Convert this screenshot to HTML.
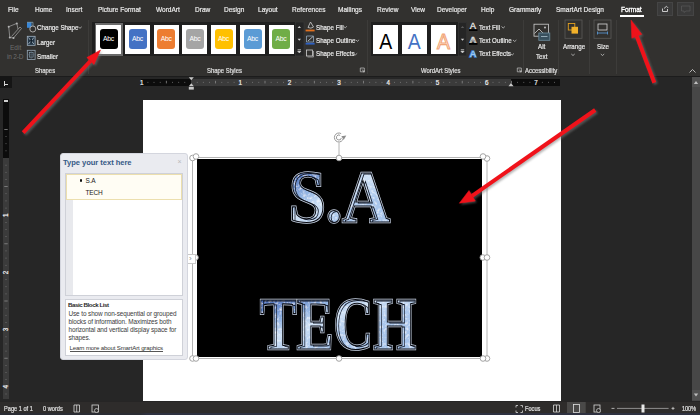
<!DOCTYPE html>
<html><head><meta charset="utf-8">
<style>
*{margin:0;padding:0;box-sizing:border-box}
html,body{width:700px;height:415px;overflow:hidden;background:#262626;font-family:"Liberation Sans",sans-serif;color:#e6e6e6}
.tab,.lbl,.btxt,.st{-webkit-text-stroke:0.2px currentColor}
.a{position:absolute}
#ribbon{left:0;top:0;width:700px;height:77px;background:#32312f;border-bottom:1px solid #1c1c1c}
.tab{position:absolute;top:5.3px;font-size:7.6px;color:#ececec;white-space:nowrap;transform:scaleX(.86);transform-origin:0 0}
.lbl{position:absolute;top:67.2px;font-size:6.9px;color:#e0e0e0;white-space:nowrap;transform:scaleX(.86);transform-origin:0 0}
.sep{position:absolute;top:20px;width:1px;height:54px;background:#3d3c3a}
.btxt{position:absolute;font-size:7.4px;color:#ececec;white-space:nowrap;transform:scaleX(.84);transform-origin:0 0}
.gal{position:absolute;top:22px;height:34px;background:#1f1f1f}
.tile{position:absolute;top:24.5px;width:25px;height:29px;background:#fff}
.sw{position:absolute;left:3.5px;top:4px;width:18px;height:20.5px;border-radius:3px;color:#fff;font-size:6.8px;text-align:center;line-height:19.5px;letter-spacing:-0.3px}
#doc{left:0;top:77px;width:700px;height:324px;background:#262626}
#page{left:142.6px;top:100.2px;width:418.2px;height:301px;background:#fff}
#status{left:0;top:401px;width:700px;height:14px;background:#2e2c2b;border-top:1px solid #262525}
.st{position:absolute;top:3.3px;font-size:6.8px;color:#e0e0e0;white-space:nowrap;transform:scaleX(.83);transform-origin:0 0}
</style></head><body>
<div id="ribbon" class="a">
  <div class="tab" style="left:8px">File</div>
  <div class="tab" style="left:35px">Home</div>
  <div class="tab" style="left:66px">Insert</div>
  <div class="tab" style="left:98px">Picture Format</div>
  <div class="tab" style="left:156px">WordArt</div>
  <div class="tab" style="left:195px">Draw</div>
  <div class="tab" style="left:224px">Design</div>
  <div class="tab" style="left:258px">Layout</div>
  <div class="tab" style="left:292px">References</div>
  <div class="tab" style="left:338px">Mailings</div>
  <div class="tab" style="left:377px">Review</div>
  <div class="tab" style="left:411px">View</div>
  <div class="tab" style="left:437px">Developer</div>
  <div class="tab" style="left:481px">Help</div>
  <div class="tab" style="left:509px">Grammarly</div>
  <div class="tab" style="left:556px">SmartArt Design</div>
  <div class="tab" style="left:620.5px;color:#fff;-webkit-text-stroke:0.35px #fff">Format</div>
  <div class="a" style="left:620.4px;top:15px;width:23.6px;height:2px;background:#fff"></div>
  <div class="a" style="left:656.7px;top:1.7px;width:16.7px;height:14.2px;background:#3a3a3a;border:0.5px solid #454545"></div>
  <div class="a" style="left:677px;top:1.7px;width:17px;height:14.2px;background:#3a3a3a;border:0.5px solid #454545"></div>

  


  <!-- Shapes group -->
  <div class="btxt" style="left:37px;top:23px">Change Shape</div>
  <div class="btxt" style="left:37px;top:38px">Larger</div>
  <div class="btxt" style="left:37px;top:52px">Smaller</div>
  <div class="lbl" style="left:35px">Shapes</div>
  <div class="sep" style="left:88px"></div>

  <!-- Shape styles gallery -->
  <div class="gal" style="left:92px;width:212px"></div>
  <div class="a" style="left:94.5px;top:22.5px;width:28px;height:33px;background:#6a6a6a"></div>
  <div class="tile" style="left:96px"><div class="sw" style="background:#000">Abc</div></div>
  <div class="tile" style="left:125px"><div class="sw" style="background:#4472c4">Abc</div></div>
  <div class="tile" style="left:153.7px"><div class="sw" style="background:#ed7d31">Abc</div></div>
  <div class="tile" style="left:182.4px"><div class="sw" style="background:#a5a5a5">Abc</div></div>
  <div class="tile" style="left:211px"><div class="sw" style="background:#ffc000">Abc</div></div>
  <div class="tile" style="left:240px"><div class="sw" style="background:#5b9bd5">Abc</div></div>
  <div class="tile" style="left:268.5px"><div class="sw" style="background:#70ad47">Abc</div></div>

  <div class="btxt" style="left:316px;top:22.5px">Shape Fill</div>
  <div class="btxt" style="left:316px;top:35.8px">Shape Outline</div>
  <div class="btxt" style="left:316px;top:49.3px">Shape Effects</div>
  <div class="lbl" style="left:207px">Shape Styles</div>
  <div class="sep" style="left:367px"></div>

  <!-- WordArt -->
  <div class="gal" style="left:371px;width:96px"></div>
  <div class="tile" style="left:373.3px;width:25px;height:29.3px;top:24.7px"></div>
  <div class="tile" style="left:401.7px;width:25px;height:29.3px;top:24.7px"></div>
  <div class="tile" style="left:431px;width:25px;height:29.3px;top:24.7px"></div>

  <div class="btxt" style="left:479px;top:22.5px">Text Fill</div>
  <div class="btxt" style="left:479px;top:35.8px">Text Outline</div>
  <div class="btxt" style="left:479px;top:49.3px">Text Effects</div>
  <div class="lbl" style="left:421.3px">WordArt Styles</div>
  <div class="sep" style="left:522.8px"></div>

  <div class="btxt" style="left:537.5px;top:42.3px">Alt</div>
  <div class="btxt" style="left:535.5px;top:51.9px">Text</div>
  <div class="lbl" style="left:525px">Accessibility</div>
  <div class="sep" style="left:558px"></div>
  <div class="btxt" style="left:563px;top:42px">Arrange</div>
  <div class="sep" style="left:588.5px"></div>
  <div class="btxt" style="left:597px;top:42px">Size</div>
  <div class="sep" style="left:616px"></div>
<svg class="a" style="left:0;top:0" width="700" height="76">
 <!-- Edit in 2-D -->
 <g stroke="#9b9b9b" stroke-width="0.8" fill="none">
  <path d="M8.7 26.7 L16.8 23.4 M8.7 26.7 L9.8 37.5 M16.8 23.4 L18 29"/>
  <path d="M21.5 28.5 L13.5 38 M20 27 L11.5 36.5 M21.5 28.5 L20 27"/>
  <path d="M9.8 37.5 L13.5 38"/>
 </g>
 <g fill="#b5b5b5"><circle cx="8.7" cy="26.7" r="1"/><circle cx="16.8" cy="23.4" r="1"/><circle cx="9.8" cy="37.5" r="1"/><circle cx="13.5" cy="38" r="1"/></g>
 <text x="10" y="49.5" font-size="6.5" fill="#6d6d6d" font-family="Liberation Sans">Edit</text>
 <text x="7" y="59" font-size="6.5" fill="#6d6d6d" font-family="Liberation Sans" letter-spacing="-0.2">in 2-D</text>
 <!-- change shape -->
 <path d="M78.3 26.8 L80 28.3 L81.7 26.8" stroke="#d8d8d8" stroke-width="0.7" fill="none"/>
 <rect x="27" y="22.3" width="4.5" height="5.5" fill="#3a87d6"/>
 <path d="M27 22.3 H33 V26" stroke="#8ab" stroke-width="0.7" fill="none"/>
 <circle cx="32.8" cy="29" r="3" fill="#32312f" stroke="#c8c8c8" stroke-width="0.8"/>
 <!-- larger -->
 <rect x="27.3" y="36.3" width="7.8" height="9" fill="#243646" stroke="#a3b4c3" stroke-width="0.8"/>
 <path d="M28.5 37.5 L30.6 40.3 M33.9 37.5 L31.8 40.3 M28.5 44.1 L30.6 41.3 M33.9 44.1 L31.8 41.3" stroke="#c9d8e4" stroke-width="0.7" fill="none"/>
 <path d="M31.2 38.3 L32.2 40.8 L31.2 43.3 L30.2 40.8 Z" fill="#0f1a24"/>
 <!-- smaller -->
 <rect x="27.3" y="50.3" width="7.8" height="9.2" fill="#2a2d30" stroke="#98a8b6" stroke-width="0.8"/>
 <rect x="29.3" y="52.5" width="3.8" height="4.6" fill="none" stroke="#8fa3b3" stroke-width="0.6"/>
 <path d="M31.2 50.5 V59.3 M27.5 54.8 H35" stroke="#5f7384" stroke-width="0.5" fill="none"/>

 <!-- gallery scroll shape styles -->
 <rect x="295.5" y="22" width="8.5" height="34" fill="#252525" stroke="#3a3a3a" stroke-width="0.6"/>
 <path d="M297.6 28 L299.3 26 L301 28 Z" fill="#cfcfcf"/>
 <path d="M297.6 38.7 L299.3 40.7 L301 38.7 Z" fill="#cfcfcf"/>
 <path d="M297.6 49.5 H301 M297.6 51 L299.3 53 L301 51 Z" stroke="#cfcfcf" stroke-width="0.6" fill="#cfcfcf"/>
 <!-- shape fill -->
 <path d="M308 27.5 L310.5 22 L313.5 27 Q311 29 308 27.5 Z" fill="none" stroke="#cfcfcf" stroke-width="0.8"/>
 <rect x="305.6" y="29.6" width="9" height="1.8" fill="#e0701f"/>
 <!-- shape outline -->
 <path d="M306.5 36 H313.5 V42 H306.5 Z" fill="none" stroke="#9db8d0" stroke-width="0.7"/>
 <path d="M308 41 L313 36.5" stroke="#d0d8e0" stroke-width="0.8"/>
 <rect x="305.6" y="42.8" width="9" height="1.8" fill="#2e5fc0"/>
 <!-- shape effects -->
 <rect x="306.5" y="50" width="6" height="6" fill="none" stroke="#d0d0d0" stroke-width="0.8"/>
 <path d="M307.5 57 H313.5 V51" fill="none" stroke="#a0a0a0" stroke-width="0.8"/>
 <path d="M343.5 26.3 L345.2 27.8 L346.9 26.3" stroke="#d8d8d8" stroke-width="0.7" fill="none"/>
 <path d="M355.7 39.8 L357.4 41.3 L359.1 39.8" stroke="#d8d8d8" stroke-width="0.7" fill="none"/>
 <path d="M353.8 53.3 L355.5 54.8 L357.2 53.3" stroke="#d8d8d8" stroke-width="0.7" fill="none"/>
 <!-- dialog launchers -->
 <path d="M360.3 71.8 V68 H364.3 V71.8 Z M361.8 69.5 L364.3 71.8 M362.8 71.8 H364.3 V70.3" stroke="#c4c4c4" stroke-width="0.7" fill="none"/>
 <path d="M517.3 71.8 V68 H521.3 V71.8 Z M518.8 69.5 L521.3 71.8 M519.8 71.8 H521.3 V70.3" stroke="#c4c4c4" stroke-width="0.7" fill="none"/>

 <!-- wordart letters -->
 <g font-family="Liberation Sans" font-size="22" text-anchor="middle">
  <text x="385.8" y="48.7" fill="#000" textLength="13" lengthAdjust="spacingAndGlyphs">A</text>
  <text x="414.2" y="48.7" fill="#4472c4" textLength="13" lengthAdjust="spacingAndGlyphs">A</text>
  <text x="443.4" y="48.7" fill="#fde9dc" stroke="#f2a577" stroke-width="1.1" textLength="13" lengthAdjust="spacingAndGlyphs">A</text>
 </g>
 <!-- wordart scroll -->
 <rect x="458.5" y="22.5" width="8" height="33.5" fill="#252525" stroke="#3a3a3a" stroke-width="0.6"/>
 <path d="M460.8 28 L462.5 26 L464.2 28 Z" fill="#5a5a5a"/>
 <path d="M460.8 38.7 L462.5 40.7 L464.2 38.7 Z" fill="#cfcfcf"/>
 <path d="M460.8 49.5 H464.2 M460.8 51 L462.5 53 L464.2 51 Z" stroke="#cfcfcf" stroke-width="0.6" fill="#cfcfcf"/>
 <!-- text fill icons -->
 <g font-family="Liberation Sans" font-size="9.5" text-anchor="middle">
  <text x="473" y="29" fill="#e8e8e8" stroke="#e8e8e8" stroke-width="0.3">A</text>
  <text x="473" y="42.5" fill="none" stroke="#e0e0e0" stroke-width="0.7" font-weight="bold">A</text>
  <text x="473" y="56.5" fill="#9cc8f0" stroke="#3d7cc9" stroke-width="1.4" paint-order="stroke" font-weight="bold">A</text>
 </g>
 <rect x="469" y="29.2" width="8.5" height="1.8" fill="#000"/>
 <rect x="469" y="43" width="8.5" height="1.8" fill="#000"/>
 <path d="M501.5 26.5 L503.2 28 L504.9 26.5" stroke="#d8d8d8" stroke-width="0.7" fill="none"/>
 <path d="M513 40 L514.7 41.5 L516.4 40" stroke="#d8d8d8" stroke-width="0.7" fill="none"/>
 <path d="M510.5 53.5 L512.2 55 L513.9 53.5" stroke="#d8d8d8" stroke-width="0.7" fill="none"/>

 <!-- alt text -->
 <rect x="534" y="24.2" width="14.5" height="12" fill="none" stroke="#cfcfcf" stroke-width="0.8"/>
 <path d="M534.5 33.5 L539 29 L543 33" fill="none" stroke="#cfcfcf" stroke-width="0.8"/>
 <circle cx="545" cy="27.5" r="0.9" fill="#cfcfcf"/>
 <rect x="538.8" y="33" width="11" height="7.3" fill="#38505e" stroke="#6c8a9c" stroke-width="0.8"/>
 <path d="M541 36.5 H547.5" stroke="#a9c0cc" stroke-width="0.8"/>

 <!-- arrange -->
 <rect x="565" y="20" width="17" height="18.3" fill="none" stroke="#5b5a58" stroke-width="0.8"/>
 <rect x="568.3" y="23.5" width="6.5" height="6.5" fill="none" stroke="#e3a020" stroke-width="0.9"/>
 <rect x="571.5" y="26.8" width="6.5" height="6.8" fill="#f2b12a"/>
 <path d="M571.3 54 L573 55.5 L574.7 54" stroke="#d8d8d8" stroke-width="0.7" fill="none"/>
 <!-- size -->
 <rect x="594" y="20" width="17" height="18.3" fill="none" stroke="#5b5a58" stroke-width="0.8"/>
 <rect x="598" y="24" width="9" height="6" fill="none" stroke="#d8d8d8" stroke-width="0.8"/>
 <path d="M597.5 33 H607.5 M597.5 31.5 V34.5 M607.5 31.5 V34.5" stroke="#5aa0e0" stroke-width="0.8" fill="none"/>
 <path d="M600.8 54 L602.5 55.5 L604.2 54" stroke="#d8d8d8" stroke-width="0.7" fill="none"/>
 <!-- collapse caret -->
 <path d="M689.5 72.5 L692.5 69.5 L695.5 72.5" stroke="#d8d8d8" stroke-width="0.8" fill="none"/>
 <!-- top right icons -->
 <path d="M662.5 8.5 V11.5 H667.5 V9 M664 8.5 L666.5 6.3 L668 7.8" fill="none" stroke="#d8d8d8" stroke-width="0.9"/>
 <path d="M681.5 6 H690 V11 H686 L684 12.5 V11 H681.5 Z" fill="none" stroke="#5a5a5a" stroke-width="0.7"/>
</svg>
</div>

<div id="doc" class="a"></div>
<div id="page" class="a"></div>


<!-- vertical ruler -->
<div class="a" style="left:3.2px;top:99.3px;width:5.4px;height:58.7px;background:#0c0c0c"></div>
<div class="a" style="left:3.5px;top:99.6px;width:4.8px;height:2.2px;background:#d0d0d0"></div>
<div class="a" style="left:3.2px;top:158px;width:5.4px;height:241px;background:#3b3b3b"></div>

<!-- ruler row -->
<div class="a" style="left:0;top:76px;width:11.5px;height:12.3px;background:#151515"></div>
<div class="a" style="left:4px;top:81px;width:1.3px;height:4.5px;background:#d8d8d8"></div>
<div class="a" style="left:4px;top:84.2px;width:3.5px;height:1.3px;background:#d8d8d8"></div>
<div class="a" style="left:141px;top:78.5px;width:50px;height:7.5px;background:#0c0c0c"></div>
<div class="a" style="left:191px;top:78.5px;width:320px;height:7.5px;background:#3b3b3b"></div>
<div class="a" style="left:511px;top:78.5px;width:49px;height:7.5px;background:#0c0c0c"></div>
<svg class="a" style="left:0;top:0" width="700" height="415">
<g fill="#8a8a8a">
<rect x="147.5" y="81.9" width="0.8" height="0.8"/>
<rect x="153.6" y="81.9" width="0.8" height="0.8"/>
<rect x="159.8" y="81.9" width="0.8" height="0.8"/>
<rect x="165.9" y="80.8" width="0.8" height="2.6"/>
<rect x="172.1" y="81.9" width="0.8" height="0.8"/>
<rect x="178.3" y="81.9" width="0.8" height="0.8"/>
<rect x="184.4" y="81.9" width="0.8" height="0.8"/>
<rect x="196.8" y="81.9" width="0.8" height="0.8"/>
<rect x="202.9" y="81.9" width="0.8" height="0.8"/>
<rect x="209.1" y="81.9" width="0.8" height="0.8"/>
<rect x="215.2" y="80.8" width="0.8" height="2.6"/>
<rect x="221.4" y="81.9" width="0.8" height="0.8"/>
<rect x="227.6" y="81.9" width="0.8" height="0.8"/>
<rect x="233.7" y="81.9" width="0.8" height="0.8"/>
<rect x="246.1" y="81.9" width="0.8" height="0.8"/>
<rect x="252.2" y="81.9" width="0.8" height="0.8"/>
<rect x="258.4" y="81.9" width="0.8" height="0.8"/>
<rect x="264.6" y="80.8" width="0.8" height="2.6"/>
<rect x="270.7" y="81.9" width="0.8" height="0.8"/>
<rect x="276.9" y="81.9" width="0.8" height="0.8"/>
<rect x="283.0" y="81.9" width="0.8" height="0.8"/>
<rect x="295.4" y="81.9" width="0.8" height="0.8"/>
<rect x="301.5" y="81.9" width="0.8" height="0.8"/>
<rect x="307.7" y="81.9" width="0.8" height="0.8"/>
<rect x="313.9" y="80.8" width="0.8" height="2.6"/>
<rect x="320.0" y="81.9" width="0.8" height="0.8"/>
<rect x="326.2" y="81.9" width="0.8" height="0.8"/>
<rect x="332.3" y="81.9" width="0.8" height="0.8"/>
<rect x="344.7" y="81.9" width="0.8" height="0.8"/>
<rect x="350.8" y="81.9" width="0.8" height="0.8"/>
<rect x="357.0" y="81.9" width="0.8" height="0.8"/>
<rect x="363.1" y="80.8" width="0.8" height="2.6"/>
<rect x="369.3" y="81.9" width="0.8" height="0.8"/>
<rect x="375.5" y="81.9" width="0.8" height="0.8"/>
<rect x="381.6" y="81.9" width="0.8" height="0.8"/>
<rect x="394.0" y="81.9" width="0.8" height="0.8"/>
<rect x="400.1" y="81.9" width="0.8" height="0.8"/>
<rect x="406.3" y="81.9" width="0.8" height="0.8"/>
<rect x="412.5" y="80.8" width="0.8" height="2.6"/>
<rect x="418.6" y="81.9" width="0.8" height="0.8"/>
<rect x="424.8" y="81.9" width="0.8" height="0.8"/>
<rect x="430.9" y="81.9" width="0.8" height="0.8"/>
<rect x="443.3" y="81.9" width="0.8" height="0.8"/>
<rect x="449.4" y="81.9" width="0.8" height="0.8"/>
<rect x="455.6" y="81.9" width="0.8" height="0.8"/>
<rect x="461.8" y="80.8" width="0.8" height="2.6"/>
<rect x="467.9" y="81.9" width="0.8" height="0.8"/>
<rect x="474.1" y="81.9" width="0.8" height="0.8"/>
<rect x="480.2" y="81.9" width="0.8" height="0.8"/>
<rect x="492.6" y="81.9" width="0.8" height="0.8"/>
<rect x="498.7" y="81.9" width="0.8" height="0.8"/>
<rect x="504.9" y="81.9" width="0.8" height="0.8"/>
<rect x="511.1" y="80.8" width="0.8" height="2.6"/>
<rect x="517.2" y="81.9" width="0.8" height="0.8"/>
<rect x="523.4" y="81.9" width="0.8" height="0.8"/>
<rect x="529.5" y="81.9" width="0.8" height="0.8"/>
<rect x="541.9" y="81.9" width="0.8" height="0.8"/>
<rect x="548.0" y="81.9" width="0.8" height="0.8"/>
<rect x="554.2" y="81.9" width="0.8" height="0.8"/>
</g>
<g font-family="Liberation Sans" font-size="6.3" fill="#f0f0f0" stroke="#f0f0f0" stroke-width="0.2" text-anchor="middle">
<text x="141.7" y="84.6">1</text>
<text x="240.3" y="84.6">1</text>
<text x="289.6" y="84.6">2</text>
<text x="338.9" y="84.6">3</text>
<text x="388.2" y="84.6">4</text>
<text x="437.5" y="84.6">5</text>
<text x="486.8" y="84.6">6</text>
<text x="536.1" y="84.6">7</text>
</g>
<path d="M188.8 77.3 H193.8 L191.3 80.3 Z" fill="#c8c8c8"/>
<path d="M188.8 86.3 H193.8 L191.3 83.3 Z" fill="#c8c8c8"/>
<rect x="188.8" y="87" width="5" height="2.6" fill="#c8c8c8"/>
<path d="M508.5 86.3 H513.5 L511 83 Z" fill="#c8c8c8"/>
<g fill="#8a8a8a">
<rect x="4.3" y="129.0" width="3.4" height="0.8"/>
<rect x="5.6" y="136.2" width="0.8" height="0.8"/>
<rect x="5.6" y="143.3" width="0.8" height="0.8"/>
<rect x="5.6" y="150.4" width="0.8" height="0.8"/>
<rect x="5.6" y="164.8" width="0.8" height="0.8"/>
<rect x="5.6" y="171.9" width="0.8" height="0.8"/>
<rect x="5.6" y="179.0" width="0.8" height="0.8"/>
<rect x="4.3" y="186.2" width="3.4" height="0.8"/>
<rect x="5.6" y="193.3" width="0.8" height="0.8"/>
<rect x="5.6" y="200.5" width="0.8" height="0.8"/>
<rect x="5.6" y="207.7" width="0.8" height="0.8"/>
<rect x="5.6" y="222.0" width="0.8" height="0.8"/>
<rect x="5.6" y="229.1" width="0.8" height="0.8"/>
<rect x="5.6" y="236.2" width="0.8" height="0.8"/>
<rect x="4.3" y="243.4" width="3.4" height="0.8"/>
<rect x="5.6" y="250.5" width="0.8" height="0.8"/>
<rect x="5.6" y="257.7" width="0.8" height="0.8"/>
<rect x="5.6" y="264.9" width="0.8" height="0.8"/>
<rect x="5.6" y="279.2" width="0.8" height="0.8"/>
<rect x="5.6" y="286.3" width="0.8" height="0.8"/>
<rect x="5.6" y="293.5" width="0.8" height="0.8"/>
<rect x="4.3" y="300.6" width="3.4" height="0.8"/>
<rect x="5.6" y="307.8" width="0.8" height="0.8"/>
<rect x="5.6" y="314.9" width="0.8" height="0.8"/>
<rect x="5.6" y="322.1" width="0.8" height="0.8"/>
<rect x="5.6" y="336.4" width="0.8" height="0.8"/>
<rect x="5.6" y="343.5" width="0.8" height="0.8"/>
<rect x="5.6" y="350.7" width="0.8" height="0.8"/>
<rect x="4.3" y="357.8" width="3.4" height="0.8"/>
<rect x="5.6" y="365.0" width="0.8" height="0.8"/>
<rect x="5.6" y="372.1" width="0.8" height="0.8"/>
<rect x="5.6" y="379.2" width="0.8" height="0.8"/>
<rect x="5.6" y="393.6" width="0.8" height="0.8"/>
</g>
<g font-family="Liberation Sans" font-size="6.3" fill="#f0f0f0" stroke="#f0f0f0" stroke-width="0.2" text-anchor="middle">
<text x="0" y="0" transform="translate(5.9,215.2) rotate(-90)" dominant-baseline="central">1</text>
<text x="0" y="0" transform="translate(5.9,272.4) rotate(-90)" dominant-baseline="central">2</text>
<text x="0" y="0" transform="translate(5.9,329.6) rotate(-90)" dominant-baseline="central">3</text>
<text x="0" y="0" transform="translate(5.9,386.8) rotate(-90)" dominant-baseline="central">4</text>

</g>
</svg>

<!-- scrollbar -->
<div class="a" style="left:692px;top:77px;width:8px;height:324px;background:#474747"></div>
<div class="a" style="left:692px;top:77px;width:8px;height:10px;background:#505050"></div>
<svg class="a" style="left:692px;top:77px" width="8" height="324">
 <path d="M1.8 7 L4 4 L6.2 7 Z" fill="#bdbdbd"/>
 <rect x="0" y="313" width="8" height="10" fill="#505050"/>
 <path d="M1.8 316.5 L4 319.5 L6.2 316.5 Z" fill="#bdbdbd"/>
</svg>

<!-- SmartArt -->
<div class="a" style="left:196.5px;top:158.5px;width:285.3px;height:198px;background:#000"></div>
<svg class="a" style="left:0;top:0" width="700" height="415">
 <g fill="none" stroke="#b4b4b4" stroke-width="1">
  <rect x="192.5" y="157.5" width="294.5" height="201"/>
  <line x1="339" y1="142.5" x2="339" y2="156"/>
 </g>
 <g fill="#fff" stroke="#9a9a9a" stroke-width="0.9">
  <circle cx="192.5" cy="158" r="2.8"/><circle cx="487" cy="158.5" r="2.8"/>
  <circle cx="192.5" cy="358.5" r="2.8"/><circle cx="487" cy="358.5" r="2.8"/>
  <circle cx="196" cy="156.5" r="2.8"/><circle cx="483" cy="156.5" r="2.8"/>
  <circle cx="196" cy="358.5" r="2.8"/><circle cx="483" cy="358.5" r="2.8"/>
  <circle cx="339" cy="158" r="2.8"/><circle cx="339" cy="358.5" r="2.8"/>
  <circle cx="195.5" cy="257.5" r="2.8"/><circle cx="482.8" cy="257.5" r="2.8"/><circle cx="487" cy="257.5" r="2.8"/>
 </g>
 <g fill="none" stroke="#8c8c8c" stroke-width="0.9">
  <path d="M341.15 133.6 A4.5 4.5 0 1 0 343.33 138.28"/>
  <path d="M340.15 135.33 A2.5 2.5 0 1 0 341.36 137.93"/>
 </g>
 <path d="M341.3 136.3 L346.3 135.6 L343.8 139.8 Z" fill="#8c8c8c"/>
</svg>


<!-- text pane -->
<div class="a" style="left:60px;top:153.3px;width:127.8px;height:206.7px;background:#eaebf0;border:1px solid #d4d6de;border-radius:3px"></div>
<div class="a" style="left:63px;top:157.5px;font-size:7.6px;font-weight:bold;color:#365a86;white-space:nowrap;letter-spacing:-0.05px">Type your text here</div>
<div class="a" style="left:177.5px;top:158px;font-size:7px;color:#b8b8b8">×</div>
<div class="a" style="left:65px;top:172.5px;width:117.5px;height:123.5px;background:#fff;border:1px solid #cfd1d8"></div>
<div class="a" style="left:66px;top:199.5px;width:7px;height:95.5px;background:#e8e9ed"></div>
<div class="a" style="left:66px;top:173.5px;width:115.5px;height:26px;background:#fffdf4;border:1px solid #ecdfae"></div>
<div class="a" style="left:79.5px;top:179.3px;width:2.4px;height:2.4px;border-radius:50%;background:#111"></div>
<div class="a" style="left:85.5px;top:176.5px;font-size:6.5px;color:#222;white-space:nowrap;letter-spacing:-0.2px">S.A</div>
<div class="a" style="left:85.5px;top:188.5px;font-size:6.5px;color:#222;white-space:nowrap;letter-spacing:-0.2px">TECH</div>
<div class="a" style="left:65px;top:298.5px;width:117.5px;height:57px;background:#fff;border:1px solid #cfd1d8"></div>
<div class="a" style="left:68px;top:301px;font-size:6.2px;font-weight:bold;color:#2a2a2a;white-space:nowrap;letter-spacing:-0.45px">Basic Block List</div>
<div class="a" style="left:68.5px;top:310.3px;font-size:6.4px;color:#3a3a3a;line-height:7.85px;white-space:nowrap;letter-spacing:-0.1px">Use to show non-sequential or grouped<br>blocks of information. Maximizes both<br>horizontal and vertical display space for<br>shapes.</div>
<div class="a" style="left:69.5px;top:344px;font-size:6.1px;color:#333;white-space:nowrap;letter-spacing:-0.15px;border-bottom:0.6px solid #555;line-height:7px">Learn more about SmartArt graphics</div>
<div class="a" style="left:187.5px;top:253.5px;width:8.5px;height:10px;background:#fff;border:1px solid #c8c8c8;border-left:none"></div>
<div class="a" style="left:189px;top:253.5px;font-size:8px;color:#888">›</div>


<!-- SmartArt text -->
<svg class="a" style="left:0;top:0" width="700" height="415">
 <defs>
  <linearGradient id="ice" gradientUnits="userSpaceOnUse" x1="0" y1="0" x2="0" y2="1">
   <stop offset="0" stop-color="#4f74bd"/>
   <stop offset="1" stop-color="#cddff3"/>
  </linearGradient>
  <linearGradient id="ice1" gradientUnits="userSpaceOnUse" x1="300" y1="170" x2="330" y2="225">
   <stop offset="0" stop-color="#4f72bb"/>
   <stop offset="0.35" stop-color="#8cafe0"/>
   <stop offset="0.62" stop-color="#cfe1f5"/>
   <stop offset="1" stop-color="#a9c6ec"/>
  </linearGradient>
  <linearGradient id="ice2" gradientUnits="userSpaceOnUse" x1="280" y1="296" x2="300" y2="352">
   <stop offset="0" stop-color="#4f72bb"/>
   <stop offset="0.35" stop-color="#8cafe0"/>
   <stop offset="0.62" stop-color="#cfe1f5"/>
   <stop offset="1" stop-color="#a9c6ec"/>
  </linearGradient>
  <filter id="tex" x="0" y="0" width="100%" height="100%">
   <feTurbulence type="fractalNoise" baseFrequency="0.35" numOctaves="2" seed="3" result="n"/>
   <feColorMatrix in="n" type="matrix" values="0 0 0 0 1  0 0 0 0 1  0 0 0 0 1  1.6 0 0 0 -0.75" result="w"/>
   <feComposite in="w" in2="SourceGraphic" operator="in" result="wm"/>
   <feMerge><feMergeNode in="SourceGraphic"/><feMergeNode in="wm"/></feMerge>
  </filter>
 </defs>
 <g font-family="Liberation Serif" font-weight="bold" font-size="74">
  <g fill="none" stroke="#c8d3e4" stroke-width="2.6">
   <text x="289" y="221.5" textLength="101" lengthAdjust="spacingAndGlyphs">S.A</text>
   <text x="260" y="349" textLength="156" lengthAdjust="spacingAndGlyphs">TECH</text>
  </g>
  <g filter="url(#tex)">
   <text x="289" y="221.5" textLength="101" lengthAdjust="spacingAndGlyphs" fill="url(#ice1)">S.A</text>
   <text x="260" y="349" textLength="156" lengthAdjust="spacingAndGlyphs" fill="url(#ice2)">TECH</text>
  </g>
  <g fill="none" stroke="#080a10" stroke-width="1.1">
   <text x="289" y="221.5" textLength="101" lengthAdjust="spacingAndGlyphs">S.A</text>
   <text x="260" y="349" textLength="156" lengthAdjust="spacingAndGlyphs">TECH</text>
  </g>
  <clipPath id="cl1"><text x="289" y="221.5" textLength="101" lengthAdjust="spacingAndGlyphs">S.A</text><text x="260" y="349" textLength="156" lengthAdjust="spacingAndGlyphs">TECH</text></clipPath>
  <g clip-path="url(#cl1)" fill="none" stroke="#0c1220" stroke-width="0.9">
   <text x="291.5" y="222.8" textLength="101" lengthAdjust="spacingAndGlyphs">S.A</text>
   <text x="262.5" y="350.3" textLength="156" lengthAdjust="spacingAndGlyphs">TECH</text>
  </g>
 </g>
</svg>

<!-- red arrows -->
<svg class="a" style="left:0;top:0" width="700" height="415">
 <defs>
  <filter id="sh" x="-20%" y="-20%" width="140%" height="140%"><feGaussianBlur stdDeviation="0.8"/></filter>
 </defs>
 <g opacity="0.55" filter="url(#sh)" transform="translate(1.5,1.5)">
  <line x1="654.3" y1="82.8" x2="636.8" y2="36.3" stroke="#7a7a7a" stroke-width="4"/>
  <polygon points="631,20 641.8,34.3 631.8,38.3" fill="#7a7a7a"/>
  <line x1="23.2" y1="132.7" x2="90.4" y2="61" stroke="#7a7a7a" stroke-width="4"/>
  <polygon points="100.5,50 94,64.5 86.8,57.5" fill="#7a7a7a"/>
  <line x1="595.2" y1="110" x2="472.1" y2="195.8" stroke="#7a7a7a" stroke-width="4"/>
  <polygon points="459.3,203.2 475.3,201.1 469,190.5" fill="#7a7a7a"/>
 </g>
 <g fill="#f0121a" stroke="#f0121a">
  <line x1="654.3" y1="82.8" x2="636.8" y2="36.3" stroke-width="4"/>
  <polygon points="631,20 641.8,34.3 631.8,38.3" stroke-width="0.5"/>
  <line x1="23.2" y1="132.7" x2="90.4" y2="61" stroke-width="4"/>
  <polygon points="100.5,50 94,64.5 86.8,57.5" stroke-width="0.5"/>
  <line x1="595.2" y1="110" x2="472.1" y2="195.8" stroke-width="4"/>
  <polygon points="459.3,203.2 475.3,201.1 469,190.5" stroke-width="0.5"/>
 </g>
</svg>

<div id="status" class="a">
  <div class="st" style="left:4px">Page 1 of 1</div>
  <div class="st" style="left:43px">0 words</div>
  <div class="st" style="left:525px">Focus</div>
  <div class="st" style="left:681.5px;letter-spacing:-0.2px">100%</div>
</div>
<svg class="a" style="left:0;top:401px" width="700" height="14">
 <path d="M74 4 H79.5 V11 H74 Z M76.7 4 V11" fill="none" stroke="#d8d8d8" stroke-width="0.8"/>
 <rect x="92" y="4" width="6.5" height="7" fill="none" stroke="#d8d8d8" stroke-width="0.8"/>
 <circle cx="96.5" cy="9.5" r="2" fill="#2e2c2b" stroke="#d8d8d8" stroke-width="0.7"/>
 <path d="M516 4.5 V6.5 M516 4.5 H518 M522.5 4.5 V6.5 M522.5 4.5 H520.5 M516 11.5 V9.5 M516 11.5 H518 M522.5 11.5 V9.5 M522.5 11.5 H520.5" stroke="#d8d8d8" stroke-width="0.8" fill="none"/>
 <path d="M553.5 4 H559.5 V11 H553.5 Z M556.5 4 V11" fill="none" stroke="#d8d8d8" stroke-width="0.8"/>
 <rect x="567" y="1" width="18.7" height="13" fill="#4a4948"/>
 <rect x="573.5" y="3.5" width="6" height="8" fill="none" stroke="#e0e0e0" stroke-width="0.8"/>
 <rect x="594" y="4" width="6" height="7" fill="none" stroke="#d8d8d8" stroke-width="0.8"/>
 <circle cx="598.5" cy="9.5" r="2" fill="#2e2c2b" stroke="#d8d8d8" stroke-width="0.7"/>
 <path d="M611.5 7.4 H614.5" stroke="#d0d0d0" stroke-width="0.8"/>
 <path d="M617 7.4 H668.6" stroke="#a8a8a8" stroke-width="0.8"/>
 <rect x="641.5" y="3.5" width="3" height="8" fill="#e8e8e8"/>
 <path d="M671.5 7.4 H674.5 M673 5.9 V8.9" stroke="#d0d0d0" stroke-width="0.8"/>
</svg>
<div class="a" style="left:0;top:412.7px;width:700px;height:2.3px;background:linear-gradient(90deg,#2a2c33 0,#2a2c33 20%,#2e3140 21%,#2e3140 100%)"></div>
</body></html>
